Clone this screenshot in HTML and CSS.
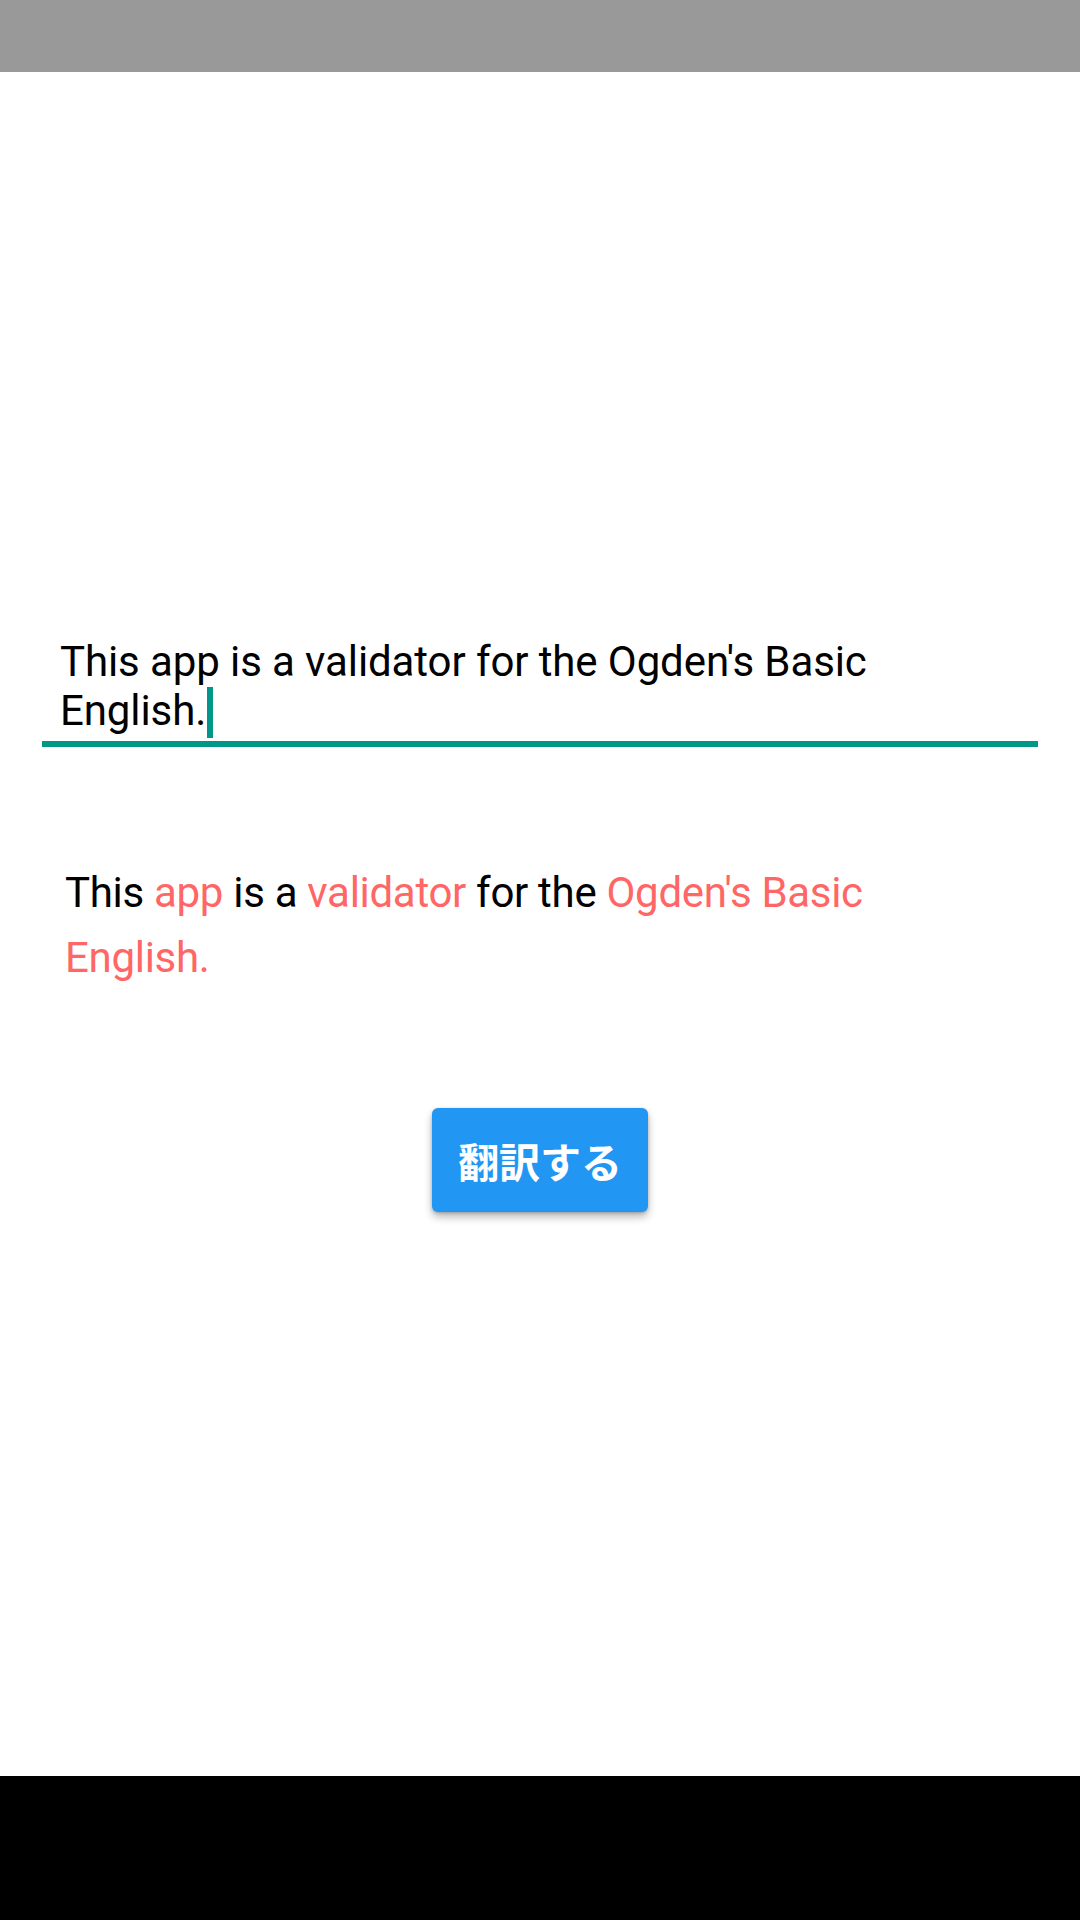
FILE: index.html
```html
<!DOCTYPE html>
<html lang="ja">
<head>
<meta charset="utf-8">
<title>Basic English Validator</title>
<link rel="stylesheet" href="styles.css">
</head>
<body>
<div class="screen">
  <div class="status-bar"></div>
  <main class="content">
    <div class="input-field">
      <p class="input-text">This app is a validator for the Ogden's Basic English.<span class="cursor"></span></p>
    </div>
    <p class="result">This <span class="bad">app</span> is a <span class="bad">validator</span> for the <span class="bad">Ogden's Basic English.</span></p>
    <button class="translate-btn" type="button">翻訳する</button>
  </main>
  <div class="nav-bar"></div>
</div>
</body>
</html>
```

FILE: styles.css
```css
html, body {
  margin: 0;
  padding: 0;
  background: #ffffff;
}

.screen {
  width: 1080px;
  height: 1920px;
  display: flex;
  flex-direction: column;
  overflow: hidden;
  font-family: Roboto, "Noto Sans", "Noto Sans CJK JP", sans-serif;
}

.status-bar {
  height: 72px;
  flex: 0 0 72px;
  background: #999999;
}

.content {
  flex: 1 1 auto;
  display: flex;
  flex-direction: column;
  padding: 565px 42px 0 42px;
  background: #ffffff;
}

.input-field {
  padding: 0 20px 6px 18px;
  border-bottom: 6px solid #009688;
}

.input-text {
  margin: 0;
  max-width: 900px;
  font-size: 42px;
  line-height: 49px;
  letter-spacing: -0.1px;
  color: #000000;
}

.cursor {
  display: inline-block;
  width: 6px;
  height: 51px;
  margin-left: 1px;
  margin-bottom: -13px;
  background: #009688;
  vertical-align: baseline;
}

.result {
  margin: 113px 0 0 0;
  padding-left: 23px;
  max-width: 880px;
  font-size: 42px;
  line-height: 65px;
  letter-spacing: -0.3px;
  color: #000000;
}

.bad {
  color: #ff6666;
}

.translate-btn {
  align-self: center;
  margin-top: 118px;
  width: 216px;
  height: 104px;
  padding: 0;
  border: none;
  border-radius: 6px;
  background: #2196f3;
  color: #ffffff;
  font-family: "Noto Sans CJK JP", "Noto Sans", sans-serif;
  font-weight: 700;
  font-size: 41px;
  line-height: 104px;
  box-shadow: 0 5px 8px rgba(0, 0, 0, 0.28), 0 1px 3px rgba(0, 0, 0, 0.2);
}

.nav-bar {
  height: 144px;
  flex: 0 0 144px;
  background: #000000;
}
```
